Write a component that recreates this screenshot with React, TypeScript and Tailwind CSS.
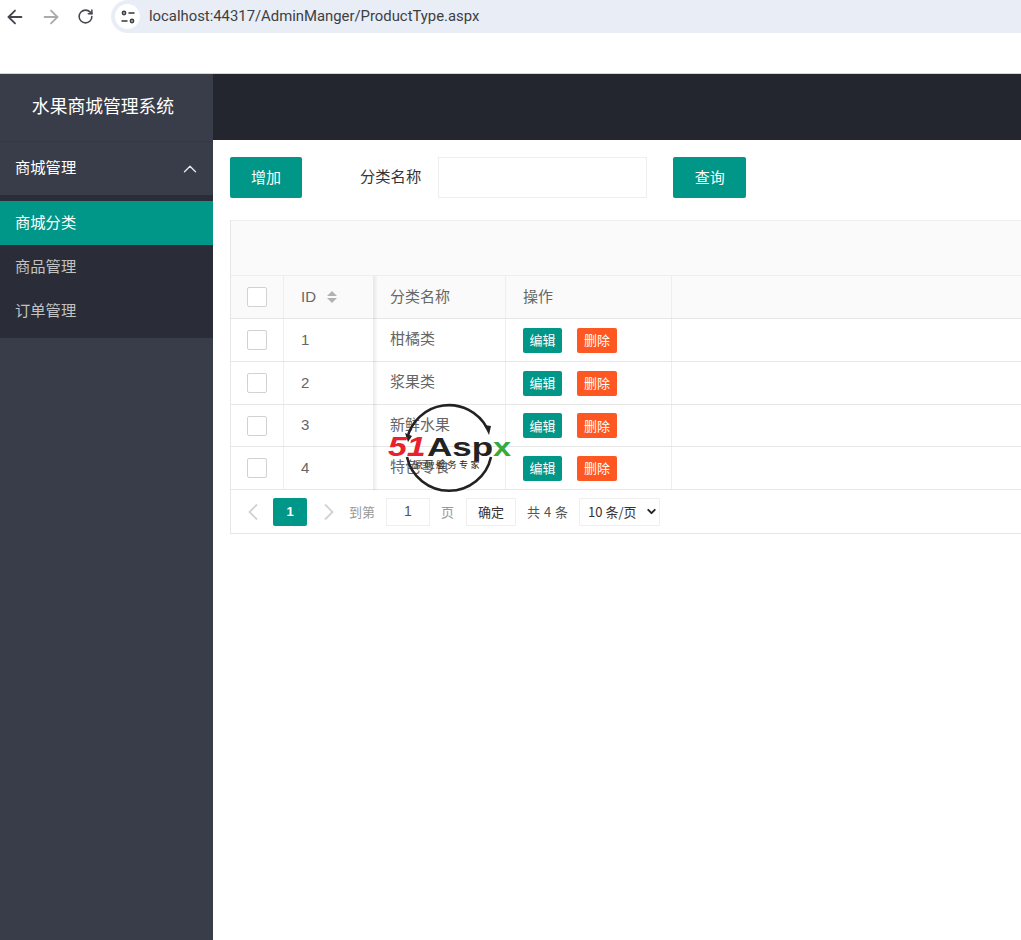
import { ArrowLeft, ArrowRight, RotateCw, ChevronUp, ChevronDown } from "lucide-react";

const font = "font-['Microsoft_YaHei','Noto_Sans_CJK_SC','Liberation_Sans',sans-serif]";

const rows = [
  { id: 1, name: "柑橘类", h: "h-[43px]" },
  { id: 2, name: "浆果类", h: "h-[43px]" },
  { id: 3, name: "新鲜水果", h: "h-[42px]" },
  { id: 4, name: "特色零食", h: "h-[43px]" },
];

function Box() {
  return <div className="w-5 h-5 rounded-[2px] border border-[#d2d2d2] bg-white" />;
}

function Tune() {
  return (
    <svg width="16" height="16" viewBox="0 0 16 16" fill="none" stroke="#3c4043" strokeWidth="1.6">
      <circle cx="4" cy="4" r="1.6" />
      <path d="M8.5 4H14.5" />
      <circle cx="12" cy="12" r="1.6" />
      <path d="M1.5 12h6" />
    </svg>
  );
}

function Pager({ d }: { d: string }) {
  return (
    <svg width="12" height="18" viewBox="0 0 12 18" fill="none" stroke="#d2d2d2" strokeWidth="1.8">
      <path d={d} />
    </svg>
  );
}

function Logo() {
  return (
    <div className="absolute left-[387px] top-[402px] w-[125px] h-[92px] pointer-events-none">
      <svg className="absolute left-0 top-0" width="125" height="92" viewBox="0 0 125 92" fill="none">
        <path d="M20 37A43 43 0 0 1 100 26" stroke="#222" strokeWidth="2.6" />
        <path d="M97 23l5 10 2-9z" fill="#222" />
        <path d="M104 55A43 43 0 0 1 20 55" stroke="#222" strokeWidth="2.6" />
        <path d="M21 40l-3-9 7 3z" fill="#222" />
      </svg>
      <div className="absolute left-[1px] top-[32px] flex items-baseline leading-[26px] font-['Liberation_Sans',sans-serif] font-bold text-[27px]">
        <span className="text-[#e8212c] italic scale-x-[1.25] origin-left inline-block w-[39px]">51</span>
        <span className="text-[#222] text-[25px] scale-x-[1.4] origin-left inline-block w-[66px]">Asp</span>
        <span className="text-[#3aa935] text-[25px] scale-x-[1.3] origin-left inline-block">x</span>
      </div>
      <div className={`absolute left-[26px] top-[57px] text-[9px] leading-[12px] text-[#222] tracking-[2.5px] whitespace-nowrap ${font}`}>源码服务专家</div>
    </div>
  );
}

export default function App() {
  return (
    <div className={`relative w-[1021px] h-[940px] overflow-hidden bg-white ${font}`}>
      <div className="h-[74px] bg-white border-b border-[#d4d6da]">
        <div className="flex items-center h-[33px]">
          <ArrowLeft className="ml-[4px] w-[22px] h-[22px] text-[#44474c]" strokeWidth={2} />
          <ArrowRight className="ml-[14px] w-[22px] h-[22px] text-[#a9abae]" strokeWidth={2} />
          <RotateCw className="ml-[15px] w-[17px] h-[17px] text-[#44474c]" strokeWidth={2.2} />
          <div className="ml-[17px] flex-1 h-[33px] rounded-l-full bg-[#e9edf6] flex items-center pl-[4px]">
            <div className="w-[25px] h-[25px] rounded-full bg-white flex items-center justify-center"><Tune /></div>
            <span className="ml-[9px] text-[14.85px] text-[#3c4043] font-['Roboto','Liberation_Sans',sans-serif]">localhost:44317/AdminManger/ProductType.aspx</span>
          </div>
        </div>
      </div>

      <div className="flex h-[866px]">
        <aside className="w-[213px] shrink-0 bg-[#393d49] flex flex-col">
          <div className="h-[67px] flex items-center justify-center pr-[7px] pb-[4px] text-white text-[17.8px]">水果商城管理系统</div>
          <div className="h-[54px] flex items-center justify-between pl-[15px] pr-[12px] border-t border-[#343843] text-white text-[15.3px]">
            <span className="pb-[4px]">商城管理</span>
            <ChevronUp className="w-[22px] h-[22px] text-[#e6e6e6]" strokeWidth={1.5} />
          </div>
          <div className="bg-[#2a2d37] pt-[6px] pb-0 h-[143px]">
            <div className="h-[44px] bg-[#009688] flex items-center pl-[15px] pb-[4px] text-white text-[15.3px]">商城分类</div>
            <div className="h-[44px] flex items-center pl-[15px] pb-[4px] text-[#c2c2c2] text-[15.3px]">商品管理</div>
            <div className="h-[44px] flex items-center pl-[15px] pb-[4px] text-[#c2c2c2] text-[15.3px]">订单管理</div>
          </div>
        </aside>

        <main className="flex-1 min-w-0">
          <div className="h-[66px] bg-[#23262e]" />
          <div className="flex items-center pl-[17px] pt-[17px] h-[58px]">
            <div className="w-[72px] h-[41px] rounded-[2px] bg-[#009688] text-white text-[15px] flex items-center justify-center">增加</div>
            <span className="ml-[58px] pb-[5px] text-[15.3px] text-[#333]">分类名称</span>
            <div className="ml-[17px] w-[209px] h-[41px] border border-[#eeeeee] bg-white" />
            <div className="ml-[26px] w-[73px] h-[41px] rounded-[2px] bg-[#009688] text-white text-[15px] flex items-center justify-center">查询</div>
          </div>

          <div className="ml-[17px] mt-[22px] border-l border-[#e6e6e6]">
            <div className="h-[56px] bg-[#fafafa] border-y border-[#eeeeee]" />
            <div className="flex h-[43px] bg-[#fafafa] border-b border-[#e6e6e6] text-[15px] text-[#666]">
              <div className="w-[53px] border-r border-[#eeeeee] flex items-center justify-center pr-[1px]"><Box /></div>
              <div className="w-[89px] flex items-center pl-[17px]">
                <span className="font-['Liberation_Sans',sans-serif]">ID</span>
                <span className="ml-[11px] flex flex-col gap-[2px]">
                  <span className="w-0 h-0 border-x-[5px] border-x-transparent border-b-[5px] border-b-[#b2b2b2]" />
                  <span className="w-0 h-0 border-x-[5px] border-x-transparent border-t-[5px] border-t-[#b2b2b2]" />
                </span>
              </div>
              <div className="w-[133px] border-r border-[#eeeeee] flex items-center pl-[17px] pb-[2px]">分类名称</div>
              <div className="w-[166px] border-r border-[#eeeeee] flex items-center pl-[17px] pb-[2px]">操作</div>
            </div>
            {rows.map((r) => (
              <div key={r.id} className={`flex ${r.h} border-b border-[#e6e6e6] text-[15px] text-[#666]`}>
                <div className="w-[53px] border-r border-[#eeeeee] flex items-center justify-center pr-[1px]"><Box /></div>
                <div className="w-[89px] flex items-center pl-[17px] font-['Liberation_Sans',sans-serif]">{r.id}</div>
                <div className="w-[133px] border-r border-[#eeeeee] flex items-center pl-[17px] pb-[3px]">{r.name}</div>
                <div className="w-[166px] border-r border-[#eeeeee] flex items-center pl-[17px]">
                  <span className="w-[39px] h-[25px] rounded-[2px] bg-[#009688] text-white text-[13px] flex items-center justify-center">编辑</span>
                  <span className="ml-[15px] w-[40px] h-[25px] rounded-[2px] bg-[#ff5722] text-white text-[13px] flex items-center justify-center">删除</span>
                </div>
              </div>
            ))}
            <div className="h-[44px] border-b border-[#e6e6e6] flex items-center text-[13px]">
              <span className="ml-[16px] flex"><Pager d="M10 1.5 2.5 9l7.5 7.5" /></span>
              <div className="ml-[14px] w-[34px] h-[28px] rounded-[2px] bg-[#009688] text-white font-bold flex items-center justify-center font-['Liberation_Sans',sans-serif]">1</div>
              <span className="ml-[16px] flex"><Pager d="M2 1.5 9.5 9 2 16.5" /></span>
              <span className="ml-[14px] text-[#999]">到第</span>
              <div className="ml-[11px] w-[44px] h-[28px] border border-[#eeeeee] flex items-center justify-center text-[14px] text-[#555] font-['Liberation_Sans',sans-serif]">1</div>
              <span className="ml-[11px] text-[#999]">页</span>
              <div className="ml-[12px] w-[50px] h-[28px] border border-[#eeeeee] rounded-[1px] flex items-center justify-center text-[#333]">确定</div>
              <span className="ml-[11px] text-[#555] whitespace-nowrap [word-spacing:1px]">共 4 条</span>
              <div className="ml-[11px] w-[81px] h-[28px] border border-[#eeeeee] rounded-[1px] flex items-center pl-[8px] text-[#333] whitespace-nowrap">
                10 条/页
                <ChevronDown className="ml-[8px] w-[13px] h-[13px] text-[#222]" strokeWidth={3.5} />
              </div>
            </div>
          </div>
        </main>
      </div>
      <div className="absolute left-[373px] top-[276px] w-[5px] h-[214px] bg-gradient-to-r from-[#00000014] to-transparent pointer-events-none" />
      <Logo />
    </div>
  );
}
